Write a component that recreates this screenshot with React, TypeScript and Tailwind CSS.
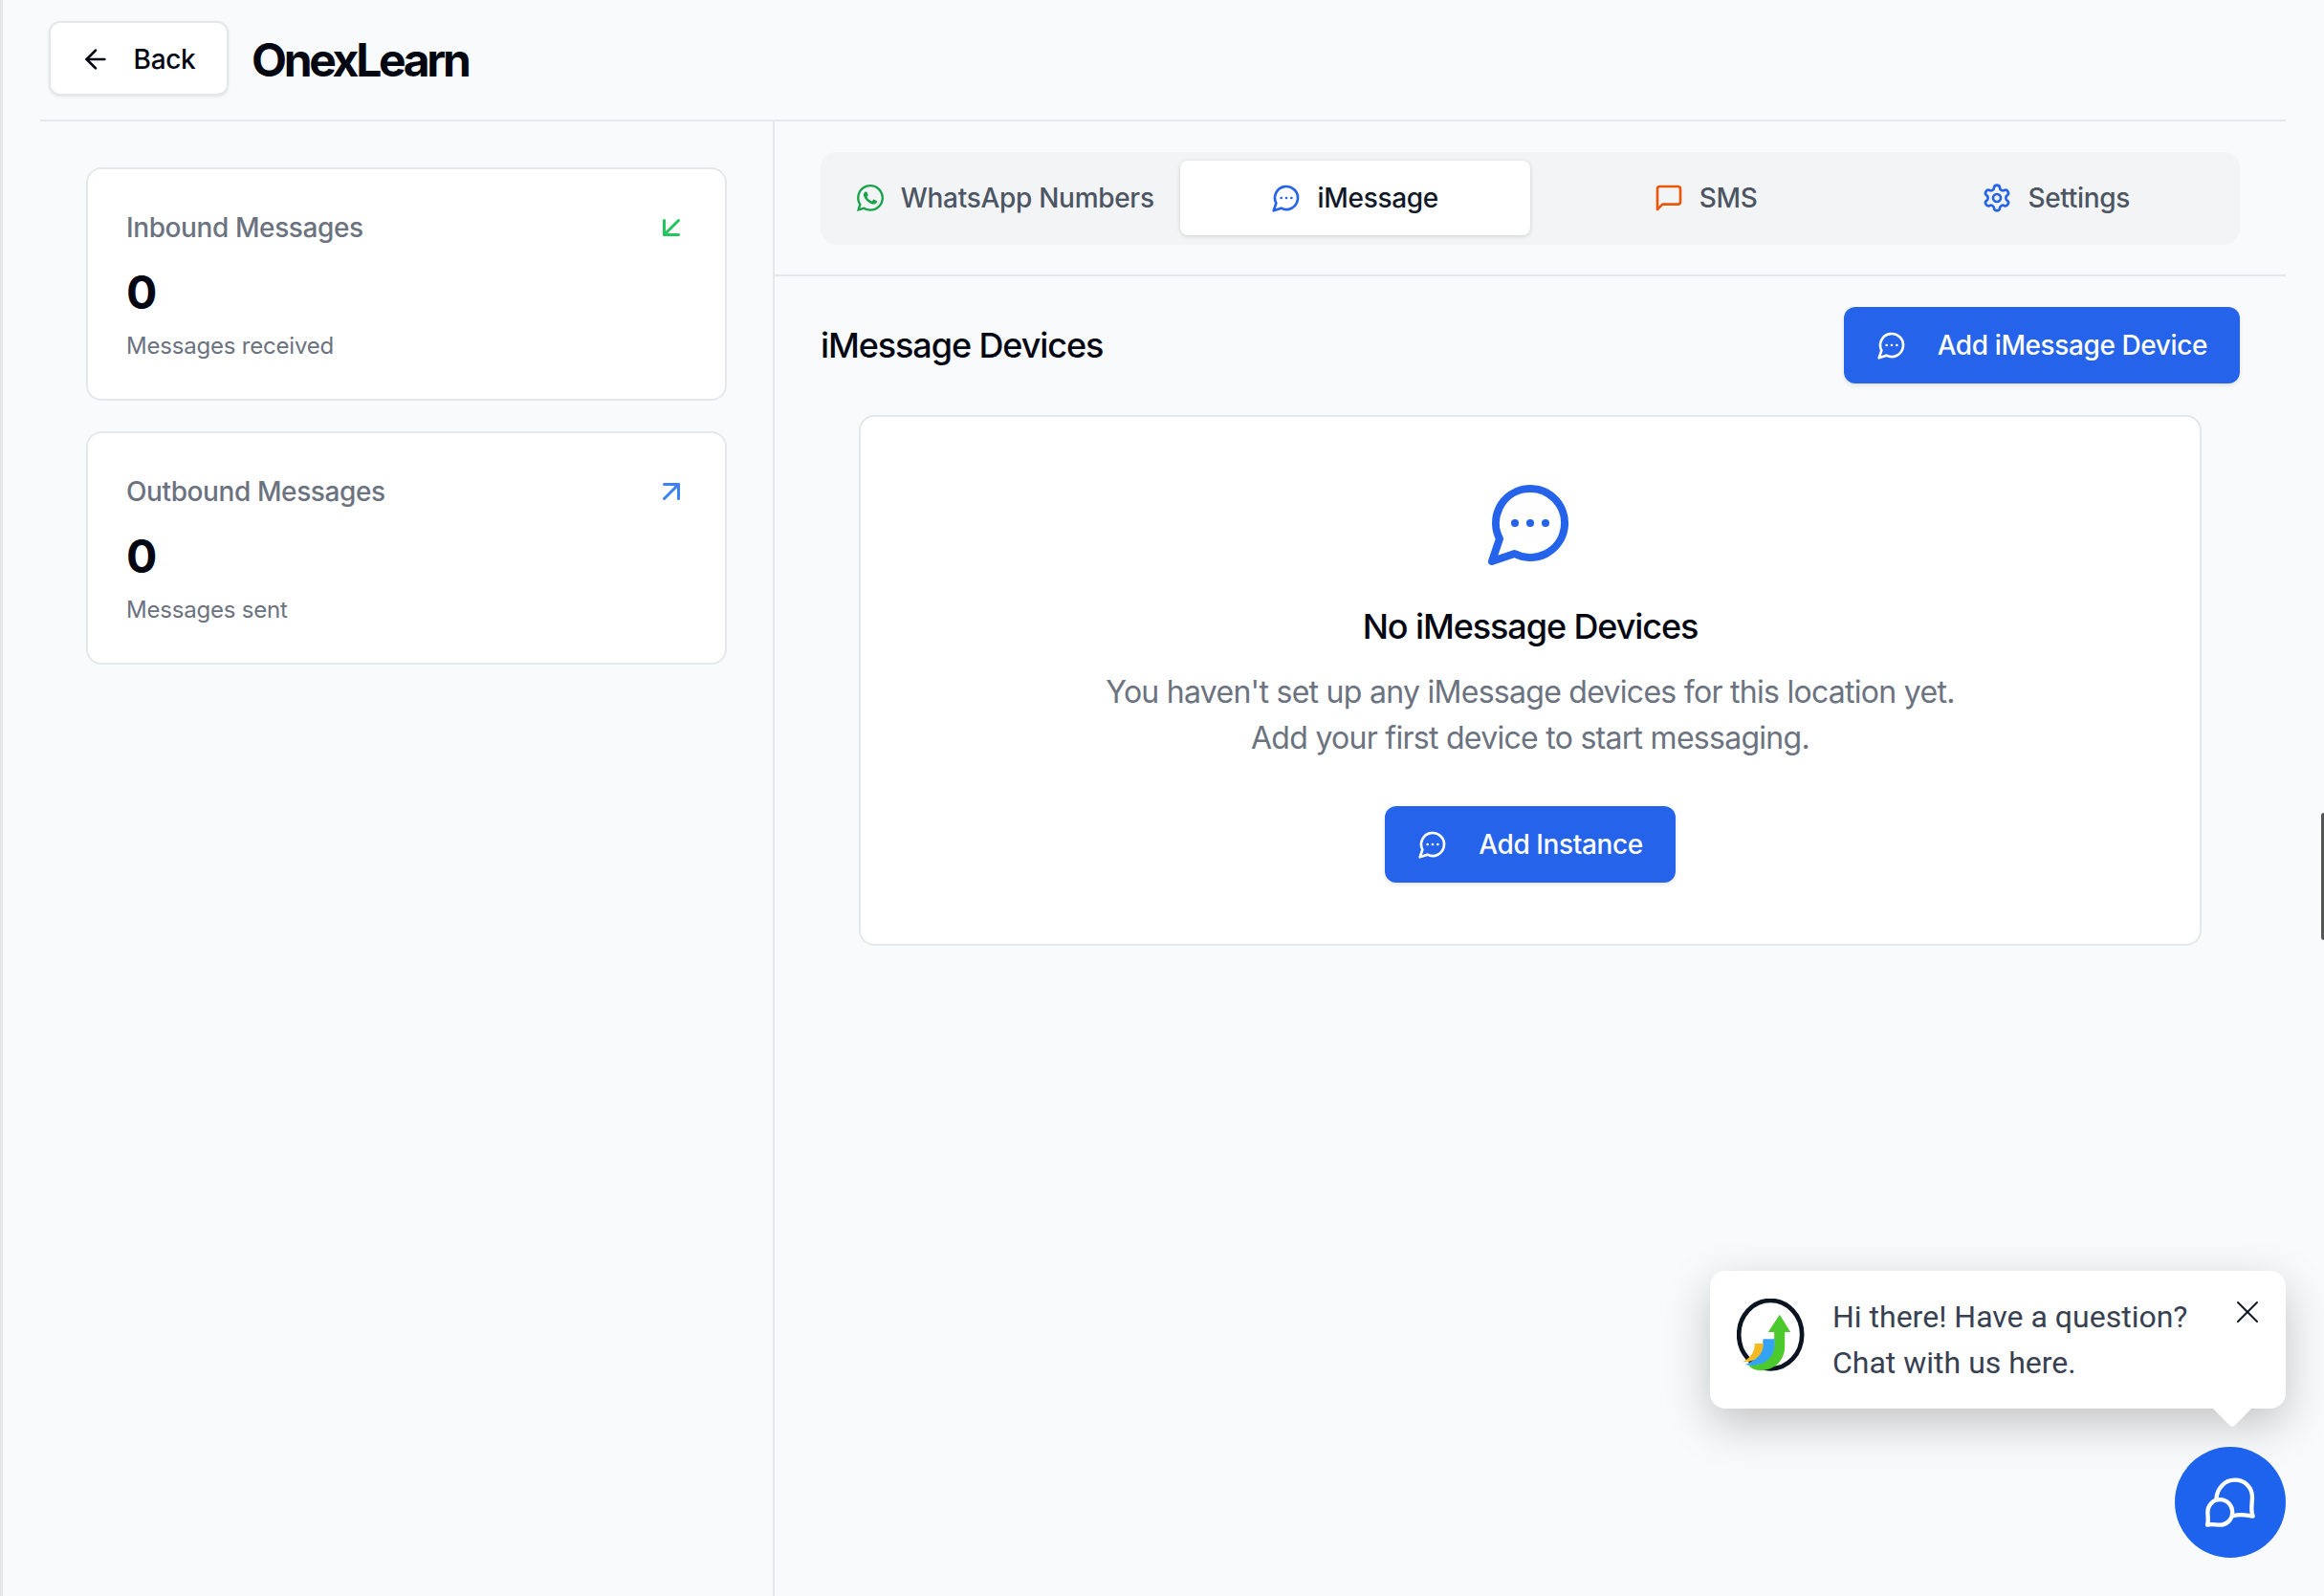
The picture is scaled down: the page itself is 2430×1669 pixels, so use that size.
import { ArrowDownLeft, ArrowLeft, ArrowUpRight, Settings, X } from "lucide-react";
import { FaWhatsapp } from "react-icons/fa";

type IconProps = { className?: string };

function BubbleDots({ className }: IconProps) {
  return (
    <svg
      viewBox="0 0 24 24"
      fill="none"
      stroke="currentColor"
      strokeWidth={2}
      strokeLinecap="round"
      strokeLinejoin="round"
      className={className}
    >
      <path d="M7.9 20A9 9 0 1 0 4 16.1L2 22Z" />
      <path d="M8 12h.01" />
      <path d="M12 12h.01" />
      <path d="M16 12h.01" />
    </svg>
  );
}

function BubbleSquare({ className }: IconProps) {
  return (
    <svg
      viewBox="0 0 24 24"
      fill="none"
      stroke="currentColor"
      strokeWidth={2}
      strokeLinecap="round"
      strokeLinejoin="round"
      className={className}
    >
      <path d="M21 15a2 2 0 0 1-2 2H7l-4 4V5a2 2 0 0 1 2-2h14a2 2 0 0 1 2 2z" />
    </svg>
  );
}

function ChatBubbles() {
  return (
    <svg
      viewBox="130 130 170 170"
      fill="none"
      stroke="white"
      strokeWidth={13}
      strokeLinecap="round"
      strokeLinejoin="round"
      className="h-[57px] w-[57px]"
    >
      <path d="M170 203C172 170 196 144 228 144C260 144 282 168 282 198C282 218 276 238 284 257C266 255 250 248 222 256" />
      <path d="M142 284C147 270 143 258 143 245C143 222 160 205 181 205C203 205 220 223 220 245C220 267 203 284 181 284C168 284 155 280 142 284Z" />
    </svg>
  );
}

function OnexLogo() {
  return (
    <svg viewBox="48 55 212 228" className="h-[76px] w-[71px] shrink-0">
      <ellipse cx="153" cy="168" rx="99" ry="107" fill="none" stroke="#0b1522" strokeWidth="14" />
      <path
        d="M182 105L216 160H198V205C198 250 165 280 122 280C106 280 94 274 84 264C130 262 165 240 165 200V160H146Z"
        fill="#4cc92d"
      />
      <path d="M130 182H166V200C166 242 128 274 74 262C108 250 130 225 130 182Z" fill="#35a3f4" />
      <path d="M104 196H131C131 228 108 256 66 254C92 240 104 222 104 196Z" fill="#f5b921" />
    </svg>
  );
}

function StatCard({
  title,
  value,
  caption,
  icon,
}: {
  title: string;
  value: string;
  caption: string;
  icon: React.ReactNode;
}) {
  return (
    <div className="h-[244px] rounded-[16px] border-2 border-[#e5e7eb] bg-white pl-[40px] pr-[38px] pt-[41px]">
      <div className="flex h-[40px] items-center justify-between">
        <span className="text-[28px] font-medium tracking-[-0.4px] text-[#6b7280]">{title}</span>
        {icon}
      </div>
      <div className="mt-[16px] text-[48px] font-[650] leading-[64px] text-[#030712]">{value}</div>
      <div className="mt-[8px] text-[24px] leading-[32px] tracking-[-0.2px] text-[#6b7280]">{caption}</div>
    </div>
  );
}

function Tab({
  label,
  icon,
  active,
}: {
  label: string;
  icon: React.ReactNode;
  active?: boolean;
}) {
  return (
    <div
      className={`flex h-[78px] items-center justify-center gap-[16px] rounded-[8px] text-[28px] font-medium tracking-[-0.3px] ${
        active
          ? "bg-white text-[#111827] shadow-[0_1px_4px_rgba(0,0,0,0.16)]"
          : "text-[#4b5563]"
      }`}
    >
      {icon}
      <span>{label}</span>
    </div>
  );
}

function PrimaryButton({ label }: { label: string }) {
  return (
    <button className="flex h-[80px] items-center gap-[32px] rounded-[12px] bg-[#2563eb] px-[34px] text-[28px] font-medium tracking-[-0.4px] text-white shadow-[0_2px_4px_rgba(0,0,0,0.1)]">
      <BubbleDots className="h-[32px] w-[32px]" />
      <span>{label}</span>
    </button>
  );
}

export default function App() {
  return (
    <div className="relative h-screen overflow-hidden border-l-[3px] border-[#e5e7eb] bg-[#f9fafb] pl-[39px] pr-[40px] font-[Inter,sans-serif]">
      <header className="flex h-[127px] items-center gap-[24px] border-b-2 border-[#e5e7eb] pb-[4px] pl-[9px]">
        <button className="flex h-[78px] w-[188px] items-center justify-center gap-[24px] rounded-[12px] border-2 border-[#e5e7eb] bg-white pr-[2px] pt-[2px] text-[28px] font-medium tracking-[-0.3px] text-[#030712] shadow-[0_1px_3px_rgba(0,0,0,0.1)]">
          <ArrowLeft className="h-[32px] w-[32px]" />
          <span>Back</span>
        </button>
        <h1 className="mt-[4px] text-[48px] font-bold tracking-[-3.3px] text-[#030712]">OnexLearn</h1>
      </header>

      <div className="flex h-[1542px]">
        <aside className="flex w-[768px] flex-col gap-[32px] border-r-2 border-[#e5e7eb] px-[48px] pt-[48px]">
          <StatCard
            title="Inbound Messages"
            value="0"
            caption="Messages received"
            icon={<ArrowDownLeft className="h-[36px] w-[36px] text-[#22c55e]" />}
          />
          <StatCard
            title="Outbound Messages"
            value="0"
            caption="Messages sent"
            icon={<ArrowUpRight className="h-[36px] w-[36px] text-[#3b82f6]" />}
          />
        </aside>

        <main className="flex-1">
          <div className="border-b-2 border-[#e5e7eb] px-[48px] pb-[31px] pt-[32px]">
            <div className="grid h-[97px] grid-cols-4 items-start rounded-[16px] bg-[#f3f4f6] px-[9px] pt-[9px]">
              <Tab label="WhatsApp Numbers" icon={<FaWhatsapp className="h-[32px] w-[32px] text-[#16a34a]" />} />
              <Tab label="iMessage" active icon={<BubbleDots className="h-[32px] w-[32px] text-[#2563eb]" />} />
              <Tab label="SMS" icon={<BubbleSquare className="h-[32px] w-[32px] text-[#ea580c]" />} />
              <Tab label="Settings" icon={<Settings className="h-[32px] w-[32px] text-[#2563eb]" />} />
            </div>
          </div>

          <div className="px-[48px] pt-[32px]">
            <div className="flex h-[80px] items-center justify-between">
              <h2 className="text-[36px] font-[550] tracking-[-1.1px] text-[#030712]">iMessage Devices</h2>
              <PrimaryButton label="Add iMessage Device" />
            </div>

            <div className="mx-[40px] mt-[33px] flex h-[555px] flex-col items-center rounded-[16px] border-2 border-[#e5e7eb] bg-white pt-[63px]">
              <BubbleDots className="h-[96px] w-[96px] text-[#2563eb]" />
              <h3 className="mt-[36px] text-[36px] font-[550] leading-[48px] tracking-[-1.1px] text-[#030712]">
                No iMessage Devices
              </h3>
              <p className="mt-[21px] text-center text-[32px] leading-[48px] tracking-[-0.72px] text-[#6b7280]">
                You haven't set up any iMessage devices for this location yet.
                <br />
                Add your first device to start messaging.
              </p>
              <div className="mt-[47px]">
                <PrimaryButton label="Add Instance" />
              </div>
            </div>
          </div>
        </main>
      </div>

      <div className="absolute bottom-[196px] right-[40px] flex h-[144px] w-[602px] rounded-[16px] bg-white pl-[28px] pt-[24px] font-[Roboto,sans-serif] shadow-[0_16px_48px_rgba(0,0,0,0.22)]">
        <div className="mt-[5px]">
          <OnexLogo />
        </div>
        <p className="ml-[29px] text-[32px] leading-[48px] text-[#374151]">
          Hi there! Have a question?
          <br />
          Chat with us here.
        </p>
        <X className="absolute right-[20px] top-[23px] h-[40px] w-[40px] text-[#111827]" strokeWidth={1.2} />
        <div className="absolute -bottom-[14px] right-[41px] h-[30px] w-[30px] rotate-45 rounded-[4px] bg-white" />
      </div>

      <button className="absolute bottom-[40px] right-[40px] flex h-[116px] w-[116px] items-center justify-center rounded-full bg-[#1d63ed]">
        <ChatBubbles />
      </button>

      <div className="absolute right-0 top-[850px] h-[133px] w-[3px] rounded-l-[3px] bg-[#555555]" />
    </div>
  );
}
